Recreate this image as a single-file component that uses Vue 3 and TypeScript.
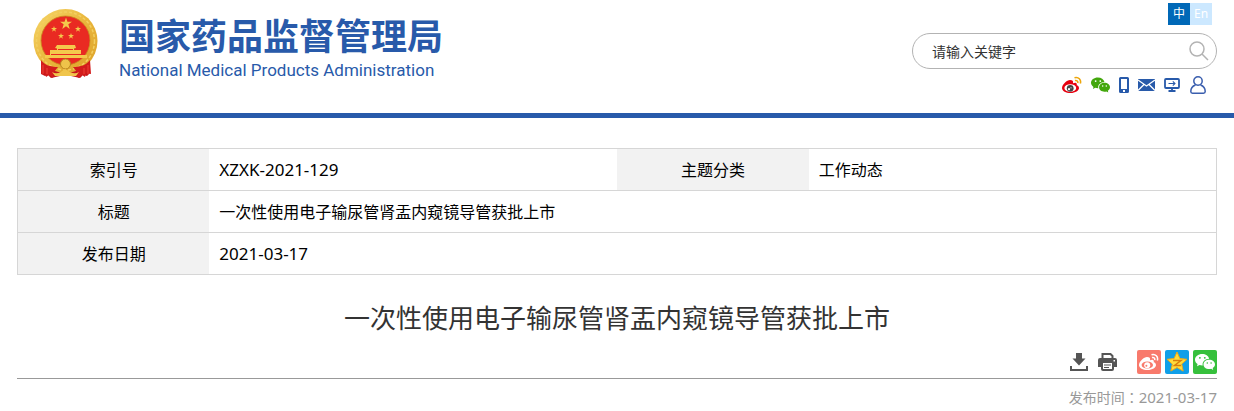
<script setup lang="ts">
import { ref } from 'vue'

const keyword = ref('')
const title = '一次性使用电子输尿管肾盂内窥镜导管获批上市'
const publishDate = '2021-03-17'
</script>

<template>
  <div class="page">
    <svg class="defs" aria-hidden="true">
      <symbol id="star" viewBox="0 0 20 20">
        <path d="M10 0 12.4 7H20L13.9 11.4 16.2 19 10 14.5 3.8 19 6.1 11.4 0 7H7.6Z" />
      </symbol>
      <symbol id="wechat" viewBox="0 0 20 16">
        <path fill-rule="evenodd" d="M7.2 0C3.2 0 0 2.5 0 5.7c0 1.8 1 3.3 2.6 4.4L2 12.3l2.500-1.300c.9.3 1.700.4 2.700.4h.500C7 7.800 10 5 14.200 4.800 13.500 2 10.700 0 7.200 0ZM4.900 2.900a.9.9 0 1 1 0 1.900.9.9 0 0 1 0-1.900Zm4.900 0a.9.9 0 1 1 0 1.900.9.9 0 0 1 0-1.900Z" />
        <path fill-rule="evenodd" d="M14.200 5.700c-3.200 0-5.700 2.100-5.700 4.700s2.500 4.700 5.700 4.700c.7 0 1.400-.1 2-.3l2 1.100-.5-1.900c1.400-.9 2.300-2.200 2.300-3.600 0-2.600-2.600-4.700-5.800-4.700Zm-1.900 2.500a.8.8 0 1 1 0 1.600.8.8 0 0 1 0-1.600Zm3.800 0a.8.8 0 1 1 0 1.600.8.8 0 0 1 0-1.600Z" />
      </symbol>
    </svg>

    <header class="header">
      <a class="brand" href="#">
        <svg class="emblem" viewBox="0 0 65 70" aria-hidden="true">
          <defs>
            <linearGradient id="gold" x1="0" y1="0" x2="1" y2="1">
              <stop offset="0" stop-color="#f6d76a" />
              <stop offset=".5" stop-color="#e9b63c" />
              <stop offset="1" stop-color="#dca128" />
            </linearGradient>
          </defs>
          <path fill="#c5161a" d="M9 48 8 65l4 2 3-1 3 3 9-2h11l9 2 3-3 4 1 3-3-2-16Z" />
          <circle cx="32.500" cy="32" r="32" fill="url(#gold)" />
          <circle cx="32.500" cy="32" r="29" fill="none" stroke="#f3cf60" stroke-width="1.500" stroke-dasharray="3 2" />
          <circle cx="32.500" cy="31.500" r="24.500" fill="#e92a22" stroke="#c98a20" stroke-width=".8" />
          <g fill="#f4c94c">
            <use href="#star" x="27" y="8.500" width="12" height="12" />
            <use href="#star" x="18" y="17" width="6" height="6" />
            <use href="#star" x="42" y="17" width="6" height="6" />
            <use href="#star" x="25" y="24" width="6" height="6" />
            <use href="#star" x="35" y="24" width="6" height="6" />
            <path d="M24 36h18l1 3-2 .5V41h7v5h6v3H12v-3h5v-5h7v-1.500l-2-.5Z" />
          </g>
          <path fill="#e92a22" d="M25 40h15v1H25zM18 45h30v1H18z" />
          <path fill="#d31c1c" d="M8 51c4 5 9 7 17 7l-4 5-1 6-4-3-3 2-1-4-4 1Zm49 0c-4 5-9 7-17 7l4 5 1 6 4-3 3 2 1-4 5 1Z" />
          <circle cx="32.500" cy="55" r="5" fill="#efc34a" stroke="#b98420" stroke-width="1" />
          <path d="M19 63c5 3 9 0 13-3 5 3 9 6 14 3l-3 4H22Z" fill="#f0c54b" />
          <path d="M10 56v9M14 59v6M51 59v6M55 56v9" stroke="#ed4135" />
        </svg>
        <span class="names">
          <span class="name-zh">国家药品监督管理局</span>
          <span class="name-en">National Medical Products Administration</span>
        </span>
      </a>

      <div class="tools">
        <nav class="langs" aria-label="语言">
          <a class="lang current" href="#">中</a>
          <a class="lang" href="#">En</a>
        </nav>
        <form class="search" role="search" @submit.prevent>
          <input v-model="keyword" type="text" placeholder="请输入关键字" aria-label="请输入关键字" />
          <button type="submit" aria-label="搜索">
            <svg width="20" height="20" viewBox="0 0 20 20" fill="none" stroke="#b3b3b3" stroke-width="1.500">
              <circle cx="8" cy="8" r="7" /><path d="m13 13 6 6" />
            </svg>
          </button>
        </form>
        <nav class="links" aria-label="快捷入口">
          <a href="#" aria-label="微博">
            <svg width="20" height="18" viewBox="0 0 20 18">
              <path fill="#e6000f" d="M8 4C5 4 0 8.500 0 12c0 3 4 5 8.500 5 5 0 8.500-2.600 8.500-5 0-1.700-1.300-2.500-2.300-2.800.6-2-.7-3.200-3.700-1.900C11.500 5 10.500 4 8 4Z" />
              <ellipse cx="8.300" cy="12.100" rx="5.900" ry="3.900" fill="#fff" />
              <circle cx="8.200" cy="12.300" r="3.400" fill="#444" />
              <circle cx="7" cy="13.200" r="1.100" fill="#fff" /><circle cx="9" cy="11.800" r=".6" fill="#fff" />
              <path d="M12.500 1.800c4-1.300 7 2 5.800 5.700M13 4.600c1.900-.5 3.200.8 2.700 2.500" fill="none" stroke="#eda60c" stroke-width="1.600" />
            </svg>
          </a>
          <a href="#" aria-label="微信">
            <svg class="green" width="19" height="16"><use href="#wechat" /></svg>
          </a>
          <a href="#" aria-label="移动客户端">
            <svg width="10" height="16" viewBox="0 0 10 16">
              <path fill="#285aaa" fill-rule="evenodd" d="M1.500 0h7A1.500 1.500 0 0 1 10 1.500v13A1.500 1.500 0 0 1 8.500 16h-7A1.500 1.500 0 0 1 0 14.500v-13A1.500 1.500 0 0 1 1.500 0ZM2 2v10h6V2Zm2 11v2h2v-2Z" />
            </svg>
          </a>
          <a href="#" aria-label="邮箱">
            <svg width="17" height="12" viewBox="0 0 17 12">
              <path fill="#285aaa" d="M0 0h17v12H0Z" />
              <path d="m0 1 8.500 6 8.500-6M0 11.500l6-6M17 11.500l-6-6" fill="none" stroke="#fff" stroke-width="1.300" />
            </svg>
          </a>
          <a href="#" aria-label="网站导航">
            <svg width="17" height="14" viewBox="0 0 17 14" fill="none" stroke="#285aaa">
              <rect x="1" y="1" width="14" height="9" rx="1" stroke-width="1.800" />
              <path d="M4.500 5.500H11M8.800 3.300 11 5.500 8.800 7.700" stroke-width="1.100" />
              <path d="M8 10v3M4.500 13h7" stroke-width="1.800" />
            </svg>
          </a>
          <a href="#" aria-label="个人中心">
            <svg width="16" height="18" viewBox="0 0 16 18" fill="none" stroke="#3a5eae" stroke-width="1.500">
              <circle cx="8" cy="5" r="4.200" />
              <path d="M5.500 9C2.500 10 .8 12.500.8 15.500c0 1 .6 1.700 1.700 1.700h11c1.100 0 1.700-.7 1.700-1.700 0-3-1.700-5.500-4.700-6.500" />
            </svg>
          </a>
        </nav>
      </div>
    </header>

    <main class="content">
      <table class="info">
        <colgroup>
          <col class="col-label" /><col class="col-value" /><col class="col-label" /><col class="col-value" />
        </colgroup>
        <tbody>
          <tr>
            <th scope="row">索引号</th>
            <td class="latin">XZXK-2021-129</td>
            <th scope="row">主题分类</th>
            <td>工作动态</td>
          </tr>
          <tr>
            <th scope="row">标题</th>
            <td colspan="3">{{ title }}</td>
          </tr>
          <tr>
            <th scope="row">发布日期</th>
            <td class="latin" colspan="3">{{ publishDate }}</td>
          </tr>
        </tbody>
      </table>

      <h1>{{ title }}</h1>

      <div class="actions">
        <button type="button" aria-label="下载">
          <svg width="18" height="18" viewBox="0 0 18 18" fill="#555">
            <path d="M6 0h6v5.500h3.500L9 12.500l-6.500-7H6Z" />
            <path d="M0 13h2v3h14v-3h2v5H0Z" />
          </svg>
        </button>
        <button type="button" aria-label="打印">
          <svg width="19" height="18" viewBox="0 0 19 18">
            <path d="M4.500 5V1h8l2 2v2" fill="none" stroke="#555" stroke-width="2" />
            <path fill="#555" fill-rule="evenodd" d="M2 5h15q2 0 2 2v7h-3v2q0 2-2 2H5q-2 0-2-2v-2H0V7q0-2 2-2Zm3 5v6h9v-6Zm10.500-3v1.500H17V7Z" />
            <path d="M6 12h7M6 14.500h5" stroke="#555" />
          </svg>
        </button>
        <div class="share">
          <button class="weibo" type="button" aria-label="分享到微博">
            <svg width="20" height="18" viewBox="0 0 20 18">
              <path fill="#fff" d="M8 4C5 4 0 8.500 0 12c0 3 4 5 8.500 5 5 0 8.500-2.600 8.500-5 0-1.700-1.300-2.500-2.300-2.800.6-2-.7-3.200-3.700-1.900C11.500 5 10.500 4 8 4Z" />
              <ellipse cx="8.300" cy="12" rx="5.700" ry="3.600" fill="#f87a6c" />
              <circle cx="8.200" cy="12.200" r="3" fill="#fff" /><circle cx="7.400" cy="12.800" r="1" fill="#f87a6c" />
              <path d="M12.500 1.800c4-1.300 7 2 5.800 5.700M13 4.600c1.900-.5 3.200.8 2.700 2.500" fill="none" stroke="#fff" stroke-width="1.500" />
            </svg>
          </button>
          <button class="qzone" type="button" aria-label="分享到QQ空间">
            <svg width="22" height="22" viewBox="0 0 22 22">
              <path d="m11 1 2.900 6.500 7.100.8-5.300 4.800 1.500 7L11 16.600l-6.200 3.500 1.500-7L1 8.300l7.100-.8Z" fill="#ffdc3c" stroke="#e9a91c" />
              <path d="M7 9.500h8L8.500 14.500H15" fill="none" stroke="#d97d0d" stroke-width="1.500" />
            </svg>
          </button>
          <button class="weixin" type="button" aria-label="分享到微信">
            <svg width="20" height="16"><use href="#wechat" /></svg>
          </button>
        </div>
      </div>

      <p class="published">发布时间<span class="colon">：</span><time class="date" :datetime="publishDate">{{ publishDate }}</time></p>
    </main>
  </div>
</template>

<style>
body {
  margin: 0;
  background: #fff;
}
</style>

<style scoped>
.page {
  font-family: "Noto Sans", "Noto Sans CJK SC", sans-serif;
  font-size: 16px;
  color: #000;
}
.defs {
  position: absolute;
  width: 0;
  height: 0;
}
svg {
  display: block;
}
a {
  text-decoration: none;
}
button {
  display: flex;
  align-items: center;
  justify-content: center;
  padding: 0;
  border: 0;
  background: none;
  cursor: pointer;
}
.header {
  display: flex;
  justify-content: space-between;
  align-items: flex-start;
  min-height: 118px;
  padding: 0 17px 0 33px;
  border-bottom: 5px solid #285aaa;
  box-sizing: border-box;
}
.brand {
  display: flex;
  gap: 21px;
  padding-top: 9px;
  color: #285aaa;
}
.emblem {
  width: 65px;
  height: 70px;
}
.names {
  display: flex;
  flex-direction: column;
  padding-top: 5px;
  white-space: nowrap;
}
.name-zh {
  font: 700 36px/40px "Noto Sans CJK SC", sans-serif;
}
.name-en {
  font: 17px/32px Roboto, sans-serif;
}
.tools {
  display: flex;
  flex-direction: column;
  align-items: flex-end;
  width: 305px;
  padding-top: 3px;
}
.langs {
  display: flex;
  margin-right: 5px;
}
.lang {
  width: 22px;
  background: #cce8ff;
  color: #fff;
  font-size: 12px;
  line-height: 22px;
  text-align: center;
}
.lang.current {
  background: #0068b7;
}
.search {
  display: flex;
  align-items: center;
  width: 100%;
  height: 36px;
  margin-top: 8px;
  padding: 0 7px 0 19px;
  border: 1px solid #b3b3b3;
  border-radius: 18px;
  box-sizing: border-box;
}
.search input {
  flex: 1;
  min-width: 0;
  padding: 0;
  border: 0;
  outline: 0;
  background: none;
  font: 14px/20px "Noto Sans CJK SC", sans-serif;
  color: #333;
}
.search input::placeholder {
  color: #333;
  opacity: 1;
}
.links {
  display: flex;
  align-items: center;
  gap: 9px;
  height: 18px;
  margin: 7px 11px 0 0;
}
.green {
  fill: #43a70d;
}
.content {
  padding: 30px 17px 0;
}
.info {
  width: 100%;
  border: 1px solid #d6d6d6;
  border-collapse: collapse;
  table-layout: fixed;
}
.col-label {
  width: 16%;
}
.col-value {
  width: 34%;
}
.info tr {
  border-top: 1px solid #d6d6d6;
}
.info th,
.info td {
  height: 41px;
  padding: 0 10px;
  font-weight: 400;
  line-height: 24px;
  text-align: left;
}
.info th {
  background: #f2f2f2;
  text-align: center;
}
.info .latin {
  font-size: 17px;
}
h1 {
  margin: 23px 0 0;
  font-size: 26px;
  font-weight: 400;
  line-height: 40px;
  text-align: center;
  color: #333;
}
.actions {
  display: flex;
  justify-content: flex-end;
  align-items: center;
  gap: 10px;
  margin-top: 12px;
  padding-bottom: 4px;
  border-bottom: 1px solid #999;
}
.share {
  display: flex;
  gap: 4px;
  margin-left: 10px;
}
.share button {
  width: 24px;
  height: 24px;
  border-radius: 2px;
}
.share .weibo {
  background: #f87a6c;
}
.share .qzone {
  background: #109fe8;
}
.share .weixin {
  background: #36c03c;
  fill: #fff;
}
.published {
  margin: 7px 0 0;
  font-size: 14px;
  line-height: 22px;
  text-align: right;
  color: #999;
}
.colon {
  font-family: "Noto Sans CJK TC", sans-serif;
}
.date {
  font-size: 15px;
}
</style>
